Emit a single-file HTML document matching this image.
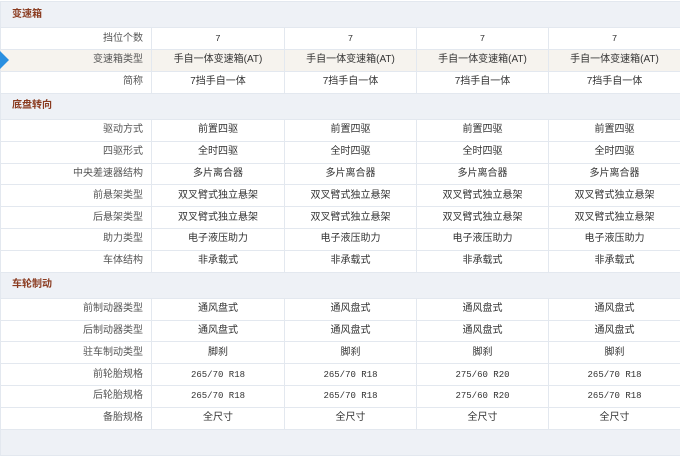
<!DOCTYPE html>
<html><head><style>
body{margin:0;width:680px;height:432px;overflow:hidden;background:#fff;font-family:"Liberation Sans","Noto Sans CJK SC",sans-serif;font-size:10px;color:#333;position:relative}
table{border-collapse:collapse;width:680px;table-layout:fixed;position:absolute;top:1px;left:0;font-size:10px}
td{border:1px solid #e3e8ef;padding:0;height:21.8px;box-sizing:border-box;text-align:center;vertical-align:middle;white-space:nowrap;font-size:10px;line-height:12px;overflow:hidden}
td.l{text-align:right;padding-right:8px;color:#555}
tr.h td{height:26.3px;background:#eef1f6;text-align:left;padding-left:11px;font-weight:bold;color:#8a3b20;font-size:10px}
tr.hl td{background:#f6f3ee}
.m{font-family:"Liberation Mono",monospace;font-size:9px}
.arrow{position:absolute;left:0;top:51px;width:0;height:0;border-top:9px solid transparent;border-bottom:9px solid transparent;border-left:9px solid #2a8fe0}
</style></head><body>
<table>
<colgroup><col style="width:151px"><col style="width:133px"><col style="width:132px"><col style="width:132px"><col style="width:132px"></colgroup>
<tr class="h"><td colspan="5">变速箱</td></tr>
<tr><td class="l">挡位个数</td><td class="m">7</td><td class="m">7</td><td class="m">7</td><td class="m">7</td></tr>
<tr class="hl"><td class="l">变速箱类型</td><td>手自一体变速箱(AT)</td><td>手自一体变速箱(AT)</td><td>手自一体变速箱(AT)</td><td>手自一体变速箱(AT)</td></tr>
<tr><td class="l">简称</td><td>7挡手自一体</td><td>7挡手自一体</td><td>7挡手自一体</td><td>7挡手自一体</td></tr>
<tr class="h"><td colspan="5">底盘转向</td></tr>
<tr><td class="l">驱动方式</td><td>前置四驱</td><td>前置四驱</td><td>前置四驱</td><td>前置四驱</td></tr>
<tr><td class="l">四驱形式</td><td>全时四驱</td><td>全时四驱</td><td>全时四驱</td><td>全时四驱</td></tr>
<tr><td class="l">中央差速器结构</td><td>多片离合器</td><td>多片离合器</td><td>多片离合器</td><td>多片离合器</td></tr>
<tr><td class="l">前悬架类型</td><td>双叉臂式独立悬架</td><td>双叉臂式独立悬架</td><td>双叉臂式独立悬架</td><td>双叉臂式独立悬架</td></tr>
<tr><td class="l">后悬架类型</td><td>双叉臂式独立悬架</td><td>双叉臂式独立悬架</td><td>双叉臂式独立悬架</td><td>双叉臂式独立悬架</td></tr>
<tr><td class="l">助力类型</td><td>电子液压助力</td><td>电子液压助力</td><td>电子液压助力</td><td>电子液压助力</td></tr>
<tr><td class="l">车体结构</td><td>非承载式</td><td>非承载式</td><td>非承载式</td><td>非承载式</td></tr>
<tr class="h"><td colspan="5">车轮制动</td></tr>
<tr><td class="l">前制动器类型</td><td>通风盘式</td><td>通风盘式</td><td>通风盘式</td><td>通风盘式</td></tr>
<tr><td class="l">后制动器类型</td><td>通风盘式</td><td>通风盘式</td><td>通风盘式</td><td>通风盘式</td></tr>
<tr><td class="l">驻车制动类型</td><td>脚刹</td><td>脚刹</td><td>脚刹</td><td>脚刹</td></tr>
<tr><td class="l">前轮胎规格</td><td class="m">265/70 R18</td><td class="m">265/70 R18</td><td class="m">275/60 R20</td><td class="m">265/70 R18</td></tr>
<tr><td class="l">后轮胎规格</td><td class="m">265/70 R18</td><td class="m">265/70 R18</td><td class="m">275/60 R20</td><td class="m">265/70 R18</td></tr>
<tr><td class="l">备胎规格</td><td>全尺寸</td><td>全尺寸</td><td>全尺寸</td><td>全尺寸</td></tr>
<tr class="h"><td colspan="5"></td></tr>
</table>
<div class="arrow"></div>
</body></html>
